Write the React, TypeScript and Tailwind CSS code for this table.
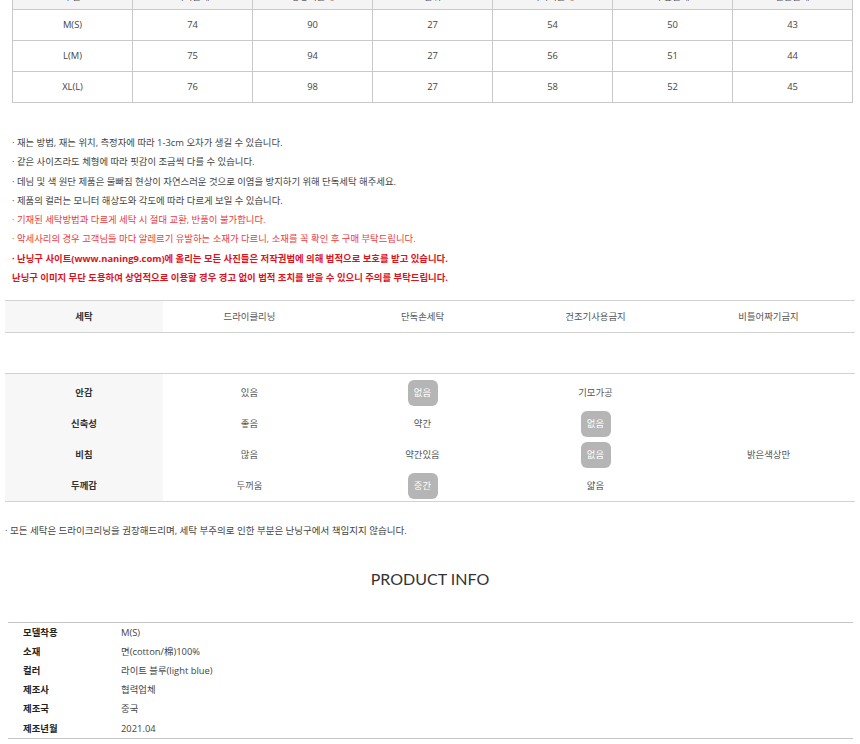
const sizeHead = ["구분", "허리둘레", "엉덩이둘레", "밑위", "허벅지둘레", "무릎둘레", "밑단둘레"];
const sizeRows = [
  ["M(S)", "74", "90", "27", "54", "50", "43"],
  ["L(M)", "75", "94", "27", "56", "51", "44"],
  ["XL(L)", "76", "98", "27", "58", "52", "45"],
];

const notes = [
  { t: "· 재는 방법, 재는 위치, 측정자에 따라 1-3cm 오차가 생길 수 있습니다.", c: "text-[#444]" },
  { t: "· 같은 사이즈라도 체형에 따라 핏감이 조금씩 다를 수 있습니다.", c: "text-[#444]" },
  { t: "· 데님 및 색 원단 제품은 물빠짐 현상이 자연스러운 것으로 이염을 방지하기 위해 단독세탁 해주세요.", c: "text-[#444]" },
  { t: "· 제품의 컬러는 모니터 해상도와 각도에 따라 다르게 보일 수 있습니다.", c: "text-[#444]" },
  { t: "· 기재된 세탁방법과 다르게 세탁 시 절대 교환, 반품이 불가합니다.", c: "text-[#ee3a3a]" },
  { t: "· 악세사리의 경우 고객님들 마다 알레르기 유발하는 소재가 다르니, 소재를 꼭 확인 후 구매 부탁드립니다.", c: "text-[#ee3a3a]" },
  { t: "· 난닝구 사이트(www.naning9.com)에 올리는 모든 사진들은 저작권법에 의해 법적으로 보호를 받고 있습니다.", c: "text-[#e0101a] font-bold" },
  { t: "난닝구 이미지 무단 도용하여 상업적으로 이용할 경우 경고 없이 법적 조치를 받을 수 있으니 주의를 부탁드립니다.", c: "text-[#e0101a] font-bold" },
];

const wash = ["드라이클리닝", "단독손세탁", "건조기사용금지", "비틀어짜기금지"];

// "*" marks the selected value (grey badge)
const fabric: [string, string[]][] = [
  ["안감", ["있음", "*없음", "기모가공", ""]],
  ["신축성", ["좋음", "약간", "*없음", ""]],
  ["비침", ["많음", "약간있음", "*없음", "밝은색상만"]],
  ["두께감", ["두꺼움", "*중간", "얇음", ""]],
];

const info = [
  ["모델착용", "M(S)"],
  ["소재", "면(cotton/棉)100%"],
  ["컬러", "라이트 블루(light blue)"],
  ["제조사", "협력업체"],
  ["제조국", "중국"],
  ["제조년월", "2021.04"],
];

function Cell({ v, first }: { v: string; first: boolean }) {
  const pad = first ? "pt-[3px]" : "";
  if (v.startsWith("*")) {
    return (
      <div className={`flex items-center justify-center ${pad}`}>
        <span className="flex h-[26px] w-[30px] items-center justify-center rounded-[6px] bg-[#b5b5b5] text-white">
          {v.slice(1)}
        </span>
      </div>
    );
  }
  return <div className={`flex items-center justify-center text-[#555] ${pad}`}>{v}</div>;
}

export default function App() {
  return (
    <div className="h-[744px] w-[860px] overflow-hidden bg-white font-['Open_Sans','Noto_Sans_CJK_KR',sans-serif] text-[9.4px]">
      <div className="ml-[12px] -mt-[14px] w-[841px] border-l border-[#c9c9c9]">
        <div className="grid h-[24px] grid-cols-7 border-b border-[#c9c9c9] bg-[#f4f4f4]">
          {sizeHead.map((h) => (
            <div key={h} className="flex items-center justify-center border-r border-[#c9c9c9] text-[#555]">
              {h}
            </div>
          ))}
        </div>
        {sizeRows.map((r) => (
          <div key={r[0]} className="grid h-[31px] grid-cols-7 border-b border-[#c9c9c9]">
            {r.map((v, i) => (
              <div key={i} className="flex items-center justify-center border-r border-[#c9c9c9] text-[#444]">
                {v}
              </div>
            ))}
          </div>
        ))}
      </div>

      <div className="mt-[30px] px-[12px] leading-[19.3px]">
        {notes.map((n) => (
          <div key={n.t} className={n.c}>
            {n.t}
          </div>
        ))}
      </div>

      <div className="mx-[5px] mt-[13px] grid h-[33px] grid-cols-[158px_repeat(4,1fr)] border-y border-[#d2d2d2]">
        <div className="flex items-center justify-center bg-[#f7f7f7] font-bold text-[#333]">세탁</div>
        {wash.map((w) => (
          <div key={w} className="flex items-center justify-center text-[#555]">
            {w}
          </div>
        ))}
      </div>

      <div className="mx-[5px] mt-[40px] border-y border-[#d2d2d2]">
        {fabric.map(([label, vals], r) => (
          <div
            key={label}
            className={`grid grid-cols-[158px_repeat(4,1fr)] ${r === 0 ? "h-[34px]" : "h-[31px]"}`}
          >
            <div
              className={`flex items-center justify-center bg-[#f7f7f7] font-bold text-[#333] ${r === 0 ? "pt-[3px]" : ""}`}
            >
              {label}
            </div>
            {vals.map((v, i) => (
              <Cell key={i} v={v} first={r === 0} />
            ))}
          </div>
        ))}
      </div>

      <div className="mt-[19px] px-[5px] text-[9.5px] leading-[19.3px] text-[#444]">
        · 모든 세탁은 드라이크리닝을 권장해드리며, 세탁 부주의로 인한 부분은 난닝구에서 책임지지 않습니다.
      </div>

      <div className="mt-[26px] text-center font-['Lato',sans-serif] text-[16px] leading-[24px] text-[#333]">
        PRODUCT INFO
      </div>

      <div className="ml-[8px] mt-[31px] w-[845px] border-y border-[#c4c4c4] leading-[19.2px]">
        {info.map(([k, v]) => (
          <div key={k} className="flex">
            <div className="w-[113px] pl-[15px] font-bold text-[#222]">{k}</div>
            <div className="text-[#444]">{v}</div>
          </div>
        ))}
      </div>
    </div>
  );
}
